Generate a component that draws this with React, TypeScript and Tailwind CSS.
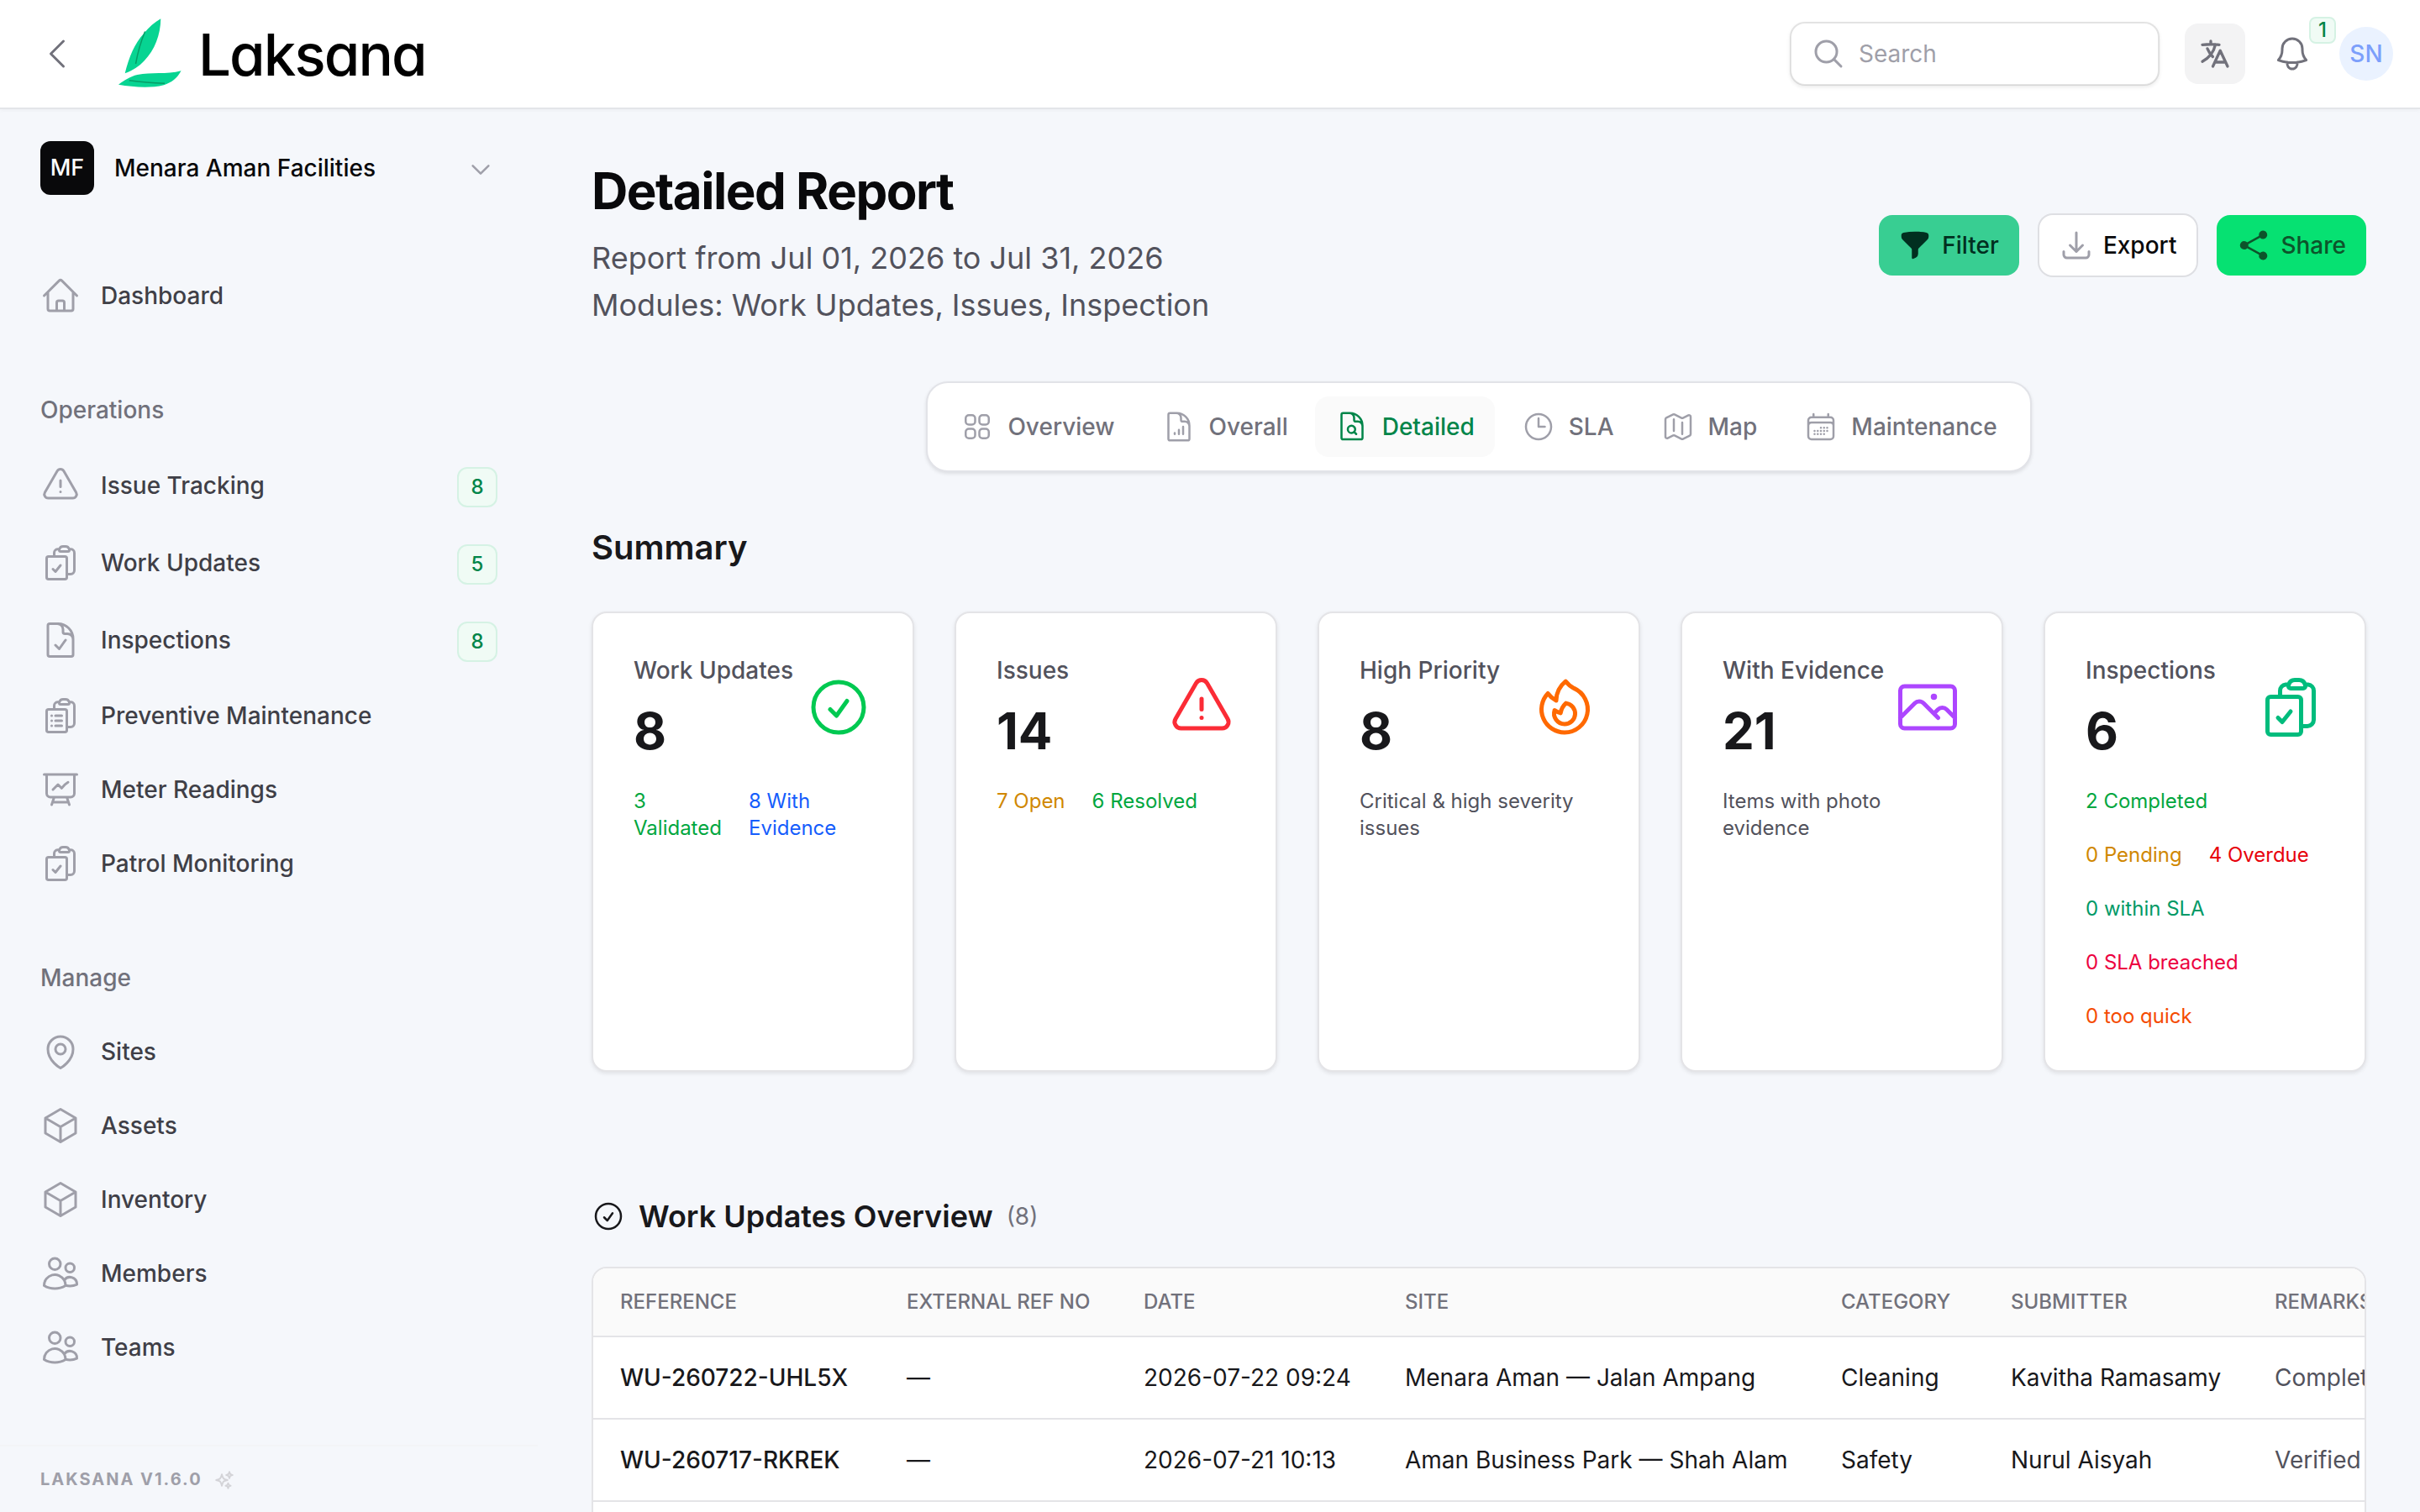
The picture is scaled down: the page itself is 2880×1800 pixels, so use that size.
import { ReactNode } from 'react';
import { IconType } from 'react-icons';
import {
  HiFunnel,
  HiOutlineArrowDownTray,
  HiOutlineBell,
  HiOutlineCalendarDays,
  HiOutlineCheckCircle,
  HiOutlineChevronDown,
  HiOutlineChevronLeft,
  HiOutlineClipboardDocumentCheck,
  HiOutlineClipboardDocumentList,
  HiOutlineClock,
  HiOutlineCube,
  HiOutlineDocumentChartBar,
  HiOutlineDocumentCheck,
  HiOutlineDocumentMagnifyingGlass,
  HiOutlineExclamationTriangle,
  HiOutlineFire,
  HiOutlineHome,
  HiOutlineLanguage,
  HiOutlineMagnifyingGlass,
  HiOutlineMap,
  HiOutlineMapPin,
  HiOutlinePhoto,
  HiOutlinePresentationChartLine,
  HiOutlineSparkles,
  HiOutlineSquares2X2,
  HiOutlineUsers,
  HiShare,
} from 'react-icons/hi2';
import clsx from 'clsx';

type NavItem = {
  label: string;
  icon: IconType;
  badge?: number;
};

type Stat = {
  text: string;
  className: string;
};

type SummaryCard = {
  title: string;
  value: number;
  icon: IconType;
  iconClass: string;
  stats?: Stat[];
  note?: string;
};

type WorkUpdate = {
  reference: string;
  external: string;
  date: string;
  site: string;
  category: string;
  submitter: string;
  remarks: string;
};

const operations: NavItem[] = [
  { label: 'Issue Tracking', icon: HiOutlineExclamationTriangle, badge: 8 },
  { label: 'Work Updates', icon: HiOutlineClipboardDocumentCheck, badge: 5 },
  { label: 'Inspections', icon: HiOutlineDocumentCheck, badge: 8 },
  { label: 'Preventive Maintenance', icon: HiOutlineClipboardDocumentList },
  { label: 'Meter Readings', icon: HiOutlinePresentationChartLine },
  { label: 'Patrol Monitoring', icon: HiOutlineClipboardDocumentCheck },
];

const manage: NavItem[] = [
  { label: 'Sites', icon: HiOutlineMapPin },
  { label: 'Assets', icon: HiOutlineCube },
  { label: 'Inventory', icon: HiOutlineCube },
  { label: 'Members', icon: HiOutlineUsers },
  { label: 'Teams', icon: HiOutlineUsers },
];

const tabs = [
  { label: 'Overview', icon: HiOutlineSquares2X2 },
  { label: 'Overall', icon: HiOutlineDocumentChartBar },
  { label: 'Detailed', icon: HiOutlineDocumentMagnifyingGlass, active: true },
  { label: 'SLA', icon: HiOutlineClock },
  { label: 'Map', icon: HiOutlineMap },
  { label: 'Maintenance', icon: HiOutlineCalendarDays },
];

const cards: SummaryCard[] = [
  {
    title: 'Work Updates',
    value: 8,
    icon: HiOutlineCheckCircle,
    iconClass: 'text-green-500',
    stats: [
      { text: '3 Validated', className: 'text-green-600 w-[105px]' },
      { text: '8 With Evidence', className: 'text-blue-600 w-[130px]' },
    ],
  },
  {
    title: 'Issues',
    value: 14,
    icon: HiOutlineExclamationTriangle,
    iconClass: 'text-red-500',
    stats: [
      { text: '7 Open', className: 'text-yellow-600' },
      { text: '6 Resolved', className: 'text-green-600' },
    ],
  },
  {
    title: 'High Priority',
    value: 8,
    icon: HiOutlineFire,
    iconClass: 'text-orange-500',
    note: 'Critical & high severity issues',
  },
  {
    title: 'With Evidence',
    value: 21,
    icon: HiOutlinePhoto,
    iconClass: 'text-purple-500',
    note: 'Items with photo evidence',
  },
  {
    title: 'Inspections',
    value: 6,
    icon: HiOutlineClipboardDocumentCheck,
    iconClass: 'text-emerald-500',
    stats: [
      { text: '2 Completed', className: 'text-green-600' },
      { text: '0 Pending', className: 'text-yellow-600' },
      { text: '4 Overdue', className: 'text-red-600' },
      { text: '0 within SLA', className: 'text-emerald-600' },
      { text: '0 SLA breached', className: 'text-rose-600' },
      { text: '0 too quick', className: 'text-orange-600' },
    ],
  },
];

const columns = [
  { label: 'Reference', width: 'w-[341px]' },
  { label: 'External Ref No', width: 'w-[282px]' },
  { label: 'Date', width: 'w-[311px]' },
  { label: 'Site', width: 'w-[519px]' },
  { label: 'Category', width: 'w-[202px]' },
  { label: 'Submitter', width: 'w-[314px]' },
  { label: 'Remarks', width: 'w-[420px]' },
];

const workUpdates: WorkUpdate[] = [
  {
    reference: 'WU-260722-UHL5X',
    external: '—',
    date: '2026-07-22 09:24',
    site: 'Menara Aman — Jalan Ampang',
    category: 'Cleaning',
    submitter: 'Kavitha Ramasamy',
    remarks: 'Completed',
  },
  {
    reference: 'WU-260717-RKREK',
    external: '—',
    date: '2026-07-21 10:13',
    site: 'Aman Business Park — Shah Alam',
    category: 'Safety',
    submitter: 'Nurul Aisyah',
    remarks: 'Verified',
  },
];

/* =========================
   LOGO
========================= */
function Logo() {
  return (
    <div className="flex items-center">
      <svg viewBox="140 22 76 82" className="mb-[3px] w-[76px] h-[82px]" fill="none">
        <path
          d="M191.3 22.3C184 26.5 177 32.5 171.5 39.5C160 52 153.5 68 148.7 87.3C158 84 165.5 79 172 72C184 59.5 191 42 191.3 22.3Z"
          fill="#07d492"
        />
        <path
          d="M141 100.7C148 95.5 155 91 163.5 89C180 85.5 198 89 215.6 84.3C211 93 204 98.5 195 101.2C178 105.5 158 103.5 141 100.7Z"
          fill="#07d492"
        />
        <path d="M172.6 37.5C167 51 163.8 63 161.5 76" stroke="#069c66" strokeWidth="1.5" />
        <path d="M153.8 95.8C168 97.8 182 98.8 196 99.2" stroke="#069c66" strokeWidth="1.5" />
      </svg>
      <span className="ml-5 mt-[2px] text-[69px] leading-[80px] text-black font-medium tracking-[-0.028em] [font-feature-settings:'cv11']">
        Laksana
      </span>
    </div>
  );
}

function CountBadge({ children, className }: { children: ReactNode; className?: string }) {
  return (
    <span
      className={clsx(
        'flex items-center justify-center border-2 border-[#d5f2e4] bg-[#f0fbf5] text-[24px] font-medium text-[#008549]',
        className
      )}
    >
      {children}
    </span>
  );
}

/* =========================
   HEADER
========================= */
function Header() {
  return (
    <header className="h-[130px] shrink-0 flex items-center justify-between bg-white border-b-2 border-[#e3e5e9] shadow-[0_2px_4px_rgba(0,0,0,0.03)] pl-11 pr-8 relative">
      <div className="flex items-center">
        <HiOutlineChevronLeft className="size-12 text-zinc-500" />
        <div className="ml-12">
          <Logo />
        </div>
      </div>

      <div className="flex items-center">
        <div className="w-[440px] h-[76px] flex items-center gap-4 rounded-[18px] border-2 border-zinc-950/10 bg-white bg-clip-padding shadow-[0_2px_4px_rgba(0,0,0,0.08)] px-6">
          <HiOutlineMagnifyingGlass className="size-10 text-zinc-400" strokeWidth={1.8} />
          <span className="text-[28px] text-zinc-400">Search</span>
        </div>

        <button className="ml-[30px] size-[72px] flex items-center justify-center rounded-2xl bg-[#f3f3f4]">
          <HiOutlineLanguage className="size-10 text-zinc-500" strokeWidth={2} />
        </button>

        <div className="relative ml-8">
          <HiOutlineBell className="size-12 text-zinc-500" />
          <CountBadge className="absolute left-11 -top-5 size-8 rounded-lg">1</CountBadge>
        </div>

        <div className="ml-8 size-16 flex items-center justify-center rounded-full bg-[#eaf2ff] text-[28px] font-medium text-[#7c9ffb]">
          SN
        </div>
      </div>
    </header>
  );
}

/* =========================
   SIDEBAR
========================= */
function NavRow({ item }: { item: NavItem }) {
  const Icon = item.icon;
  return (
    <a className={clsx('flex items-center pl-12 pr-12', item.badge ? 'h-[92px]' : 'h-[88px]')}>
      <Icon className="size-12 text-zinc-400" />
      <span className="ml-6 flex-1 text-[28px] font-medium text-zinc-700">{item.label}</span>
      {item.badge && <CountBadge className="mt-1 size-12 rounded-xl">{item.badge}</CountBadge>}
    </a>
  );
}

function NavGroup({ title, items }: { title: string; items: NavItem[] }) {
  return (
    <div className="mt-16">
      <h3 className="mb-4 pl-12 text-[28px] leading-[56px] font-medium text-zinc-500">{title}</h3>
      {items.map((item) => (
        <NavRow key={item.label} item={item} />
      ))}
    </div>
  );
}

function Sidebar() {
  return (
    <aside className="w-[640px] shrink-0 flex flex-col">
      <div className="mt-[38px] flex items-center pl-12 pr-[53px]">
        <div className="size-16 flex items-center justify-center rounded-xl bg-zinc-950 text-[27px] font-medium text-white">
          MF
        </div>
        <span className="ml-6 flex-1 text-[28px] font-medium text-zinc-950">
          Menara Aman Facilities
        </span>
        <HiOutlineChevronDown className="size-[30px] mt-1 text-zinc-400" strokeWidth={2} />
      </div>

      <nav className="mt-[76px] flex-1">
        <NavRow item={{ label: 'Dashboard', icon: HiOutlineHome }} />
        <NavGroup title="Operations" items={operations} />
        <NavGroup title="Manage" items={manage} />
      </nav>

      <div className="h-20 flex items-center gap-[14px] border-t-2 border-[#f3f4f6] pl-12">
        <span className="text-[20px] font-bold tracking-[0.1em] text-zinc-400">LAKSANA V1.6.0</span>
        <HiOutlineSparkles className="size-6 mt-[2px] text-zinc-300" strokeWidth={2} />
      </div>
    </aside>
  );
}

/* =========================
   REPORT
========================= */
function ReportActions() {
  return (
    <div className="mt-[2px] flex items-center gap-6 text-[28px] font-medium">
      <button className="h-[72px] flex items-center gap-3 rounded-2xl bg-[#38ce92] pl-[23px] pr-6 text-[#012f20]">
        <HiFunnel className="size-10" />
        Filter
      </button>
      <button className="h-[72px] flex items-center gap-3 rounded-2xl bg-white px-6 text-zinc-950 ring-2 ring-[#dedfe3]">
        <HiOutlineArrowDownTray className="size-10 text-zinc-400" strokeWidth={1.8} />
        Export
      </button>
      <button className="h-[72px] flex items-center gap-3 rounded-2xl bg-[#06e172] px-6 text-[#0d542b]">
        <HiShare className="size-10" />
        Share
      </button>
    </div>
  );
}

function ReportTabs() {
  return (
    <div className="mt-[63px] mx-auto w-fit flex gap-2 rounded-[26px] border-2 border-[#e2e3e8] bg-white px-[15px] py-4 shadow-[0_2px_4px_rgba(0,0,0,0.1)]">
      {tabs.map(({ label, icon: Icon, active }) => (
        <button
          key={label}
          className={clsx(
            'h-[72px] flex items-center gap-4 rounded-2xl px-6 text-[28px] font-medium',
            active ? 'bg-zinc-50 text-[#008549]' : 'text-zinc-500'
          )}
        >
          <Icon className={clsx('size-10', !active && 'text-zinc-400')} />
          {label}
        </button>
      ))}
    </div>
  );
}

function StatCard({ card }: { card: SummaryCard }) {
  const Icon = card.icon;
  return (
    <div className="h-[548px] rounded-[18px] border-2 border-zinc-200 bg-white p-12 shadow-[0_2px_5px_rgba(0,0,0,0.09)]">
      <div className="flex items-center justify-between">
        <div>
          <p className="text-[28px] leading-10 font-medium text-zinc-600 whitespace-nowrap">
            {card.title}
          </p>
          <p className="mt-4 text-[60px] leading-[72px] font-bold text-zinc-900">{card.value}</p>
        </div>
        <Icon className={clsx('size-20 shrink-0', card.iconClass)} />
      </div>

      {card.stats && (
        <div
          className={clsx(
            'mt-8 flex gap-8 text-[24px] leading-8',
            card.stats.length > 2 && 'flex-wrap'
          )}
        >
          {card.stats.map((stat) => (
            <span key={stat.text} className={stat.className}>
              {stat.text}
            </span>
          ))}
        </div>
      )}
      {card.note && <p className="mt-8 text-[24px] leading-8 text-zinc-600">{card.note}</p>}
    </div>
  );
}

function WorkUpdatesTable() {
  return (
    <div className="mt-8 h-[400px] overflow-hidden rounded-[18px] border-2 border-zinc-200 bg-white">
      <table className="w-[2389px] table-fixed border-separate border-spacing-0 text-left">
        <thead className="bg-zinc-50">
          <tr>
            {columns.map((column) => (
              <th
                key={column.label}
                className={clsx(
                  'h-[82px] border-b-2 border-zinc-200 px-8 text-[24px] font-medium uppercase whitespace-nowrap text-zinc-500',
                  column.width
                )}
              >
                {column.label}
              </th>
            ))}
          </tr>
        </thead>
        <tbody className="text-[28px] whitespace-nowrap text-zinc-900">
          {workUpdates.map((row) => (
            <tr key={row.reference}>
              <td className="h-[98px] border-b-2 border-zinc-200 px-8 font-medium">
                {row.reference}
              </td>
              <td className="border-b-2 border-zinc-200 px-8">{row.external}</td>
              <td className="border-b-2 border-zinc-200 px-8">{row.date}</td>
              <td className="border-b-2 border-zinc-200 px-8">{row.site}</td>
              <td className="border-b-2 border-zinc-200 px-8">{row.category}</td>
              <td className="border-b-2 border-zinc-200 px-8">{row.submitter}</td>
              <td className="border-b-2 border-zinc-200 px-8 text-zinc-600">{row.remarks}</td>
            </tr>
          ))}
        </tbody>
      </table>
    </div>
  );
}

function DetailedReport() {
  return (
    <main className="flex-1 min-w-0 px-16 pt-[61px]">
      <div className="flex items-center justify-between">
        <div>
          <h1 className="text-[60px] leading-[72px] font-bold tracking-[-0.025em] text-zinc-950">
            Detailed Report
          </h1>
          <p className="mt-4 text-[36px] leading-[56px] text-zinc-600">
            Report from Jul 01, 2026 to Jul 31, 2026
            <br />
            Modules: Work Updates, Issues, Inspection
          </p>
        </div>
        <ReportActions />
      </div>

      <ReportTabs />

      <h2 className="mt-[62px] text-[40px] leading-[56px] font-semibold text-zinc-900">Summary</h2>
      <div className="mt-12 grid grid-cols-5 gap-12">
        {cards.map((card) => (
          <StatCard key={card.title} card={card} />
        ))}
      </div>

      <div className="mt-36 flex items-center gap-4">
        <HiOutlineCheckCircle className="size-10 text-zinc-900" />
        <h2 className="text-[36px] leading-[56px] font-semibold text-zinc-900">
          Work Updates Overview
        </h2>
        <span className="text-[28px] text-zinc-500">(8)</span>
      </div>
      <WorkUpdatesTable />
    </main>
  );
}

export default function App() {
  return (
    <div className="w-[2880px] h-[1800px] overflow-hidden flex flex-col bg-[#f5f7fb] font-['Inter',sans-serif] antialiased">
      <Header />
      <div className="flex-1 min-h-0 flex">
        <Sidebar />
        <DetailedReport />
      </div>
    </div>
  );
}
